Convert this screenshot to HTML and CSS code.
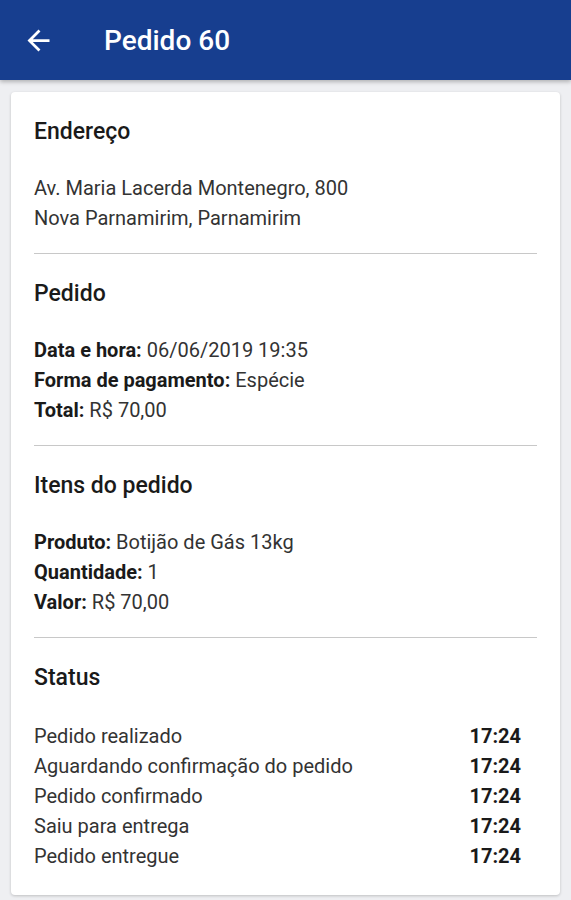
FILE: index.html
```html
<!DOCTYPE html>
<html lang="pt-BR">
<head>
<meta charset="UTF-8">
<meta name="viewport" content="width=device-width, initial-scale=1.0">
<title>Pedido 60</title>
<link rel="stylesheet" href="styles.css">
</head>
<body>

<header class="toolbar">
    <svg class="back" width="33" height="33" viewBox="0 0 24 24">
        <path d="M20 11H7.83l5.59-5.59L12 4l-8 8 8 8 1.41-1.41L7.83 13H20v-2z" fill="#fff"/>
    </svg>
    <h1>Pedido 60</h1>
</header>

<div class="page">
    <div class="card">
        <div class="section">
            <h2>Endereço</h2>
            <p>Av. Maria Lacerda Montenegro, 800</p>
            <p>Nova Parnamirim, Parnamirim</p>
        </div>
        <div class="section">
            <h2>Pedido</h2>
            <p><b>Data e hora:</b> 06/06/2019 19:35</p>
            <p><b>Forma de pagamento:</b> Espécie</p>
            <p><b>Total:</b> R$ 70,00</p>
        </div>
        <div class="section">
            <h2>Itens do pedido</h2>
            <p><b>Produto:</b> Botijão de Gás 13kg</p>
            <p><b>Quantidade:</b> 1</p>
            <p><b>Valor:</b> R$ 70,00</p>
        </div>
        <div class="section status">
            <h2>Status</h2>
            <div class="status-row"><span>Pedido realizado</span><b>17:24</b></div>
            <div class="status-row"><span>Aguardando confirmação do pedido</span><b>17:24</b></div>
            <div class="status-row"><span>Pedido confirmado</span><b>17:24</b></div>
            <div class="status-row"><span>Saiu para entrega</span><b>17:24</b></div>
            <div class="status-row"><span>Pedido entregue</span><b>17:24</b></div>
        </div>
    </div>
</div>

</body>
</html>
```

FILE: styles.css
```css
body {
    font-family: Roboto, "Noto Sans", sans-serif;
    background-color: #eeeff2;
    margin: 0;
    padding: 0;
}

.toolbar {
    height: 80px;
    background-color: #173e8f;
    display: flex;
    align-items: center;
    padding: 0 22px;
    box-shadow: 0 2px 4px rgba(0, 0, 0, 0.25);
}

.toolbar .back {
    flex-shrink: 0;
}

.toolbar h1 {
    margin: 0 0 0 49px;
    color: #fff;
    font-size: 28px;
    font-weight: 500;
}

.page {
    padding: 12px 11px;
}

.card {
    background-color: #fff;
    border-radius: 4px;
    padding: 0 23px;
    box-shadow: 0 1px 3px rgba(0, 0, 0, 0.2);
}

.section {
    padding: 26px 0 20px;
    border-bottom: 1px solid #c8c8c8;
}

.section:last-child {
    border-bottom: none;
    padding-bottom: 24px;
}

h2 {
    margin: 0 0 27px;
    font-size: 23px;
    line-height: 28px;
    font-weight: 500;
    color: #1a1a1a;
}

.status h2 {
    margin-bottom: 29px;
}

p {
    margin: 0;
    font-size: 20px;
    line-height: 30px;
    color: #333;
}

p b {
    font-weight: 700;
    color: #1a1a1a;
}

.status-row {
    display: flex;
    justify-content: space-between;
    padding-right: 16px;
    font-size: 20px;
    line-height: 30px;
    color: #333;
}

.status-row b {
    color: #1a1a1a;
}
```
